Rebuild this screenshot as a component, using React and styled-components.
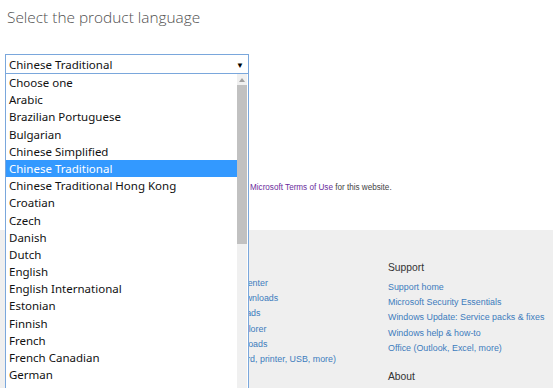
import React from 'react';
import styled, { createGlobalStyle } from 'styled-components';

const COLORS = {
  heading: '#505050',
  text: '#111',
  border: '#7aa7dc',
  highlight: '#3399ff',
  footer: '#efefef',
  link: '#3d7cbd',
  visited: '#6a2c9c',
};

const LANGUAGES = [
  'Choose one', 'Arabic', 'Brazilian Portuguese', 'Bulgarian', 'Chinese Simplified',
  'Chinese Traditional', 'Chinese Traditional Hong Kong', 'Croatian', 'Czech', 'Danish',
  'Dutch', 'English', 'English International', 'Estonian', 'Finnish', 'French',
  'French Canadian', 'German', 'Greek',
];

const GlobalStyle = createGlobalStyle`
  html, body { margin: 0; padding: 0; background: #fff; }
  body { font-family: "Noto Sans", "Open Sans", sans-serif; overflow: hidden; }
`;

const Page = styled.div`
  position: relative;
  width: 553px;
  height: 388px;
  overflow: hidden;
`;

const Main = styled.div`
  padding: 6px 5px 0 5px;
  height: 230px;
  box-sizing: border-box;
`;

const Heading = styled.h1`
  font-family: "Open Sans", sans-serif;
  font-weight: 300;
  font-size: 15.4px;
  color: ${COLORS.heading};
  margin: 0 0 0 2px;
  line-height: 24px;
`;

const SelectBox = styled.div`
  margin-top: 24px;
  width: 244px;
  height: 20px;
  box-sizing: border-box;
  border: 1px solid ${COLORS.border};
  display: flex;
  align-items: center;
  justify-content: space-between;
  padding: 0 4px 0 3px;
  font-size: 11.5px;
  color: ${COLORS.text};
`;

const Arrow = styled.span`
  font-size: 8px;
  color: #000;
`;

const Terms = styled.p`
  margin: 109px 0 0 245px;
  font-family: "Liberation Sans", sans-serif;
  font-size: 8.15px;
  color: #444;
`;

const TermsLink = styled.a`
  color: ${COLORS.visited};
  text-decoration: none;
`;

const Footer = styled.footer`
  background: ${COLORS.footer};
  height: 158px;
  display: grid;
  grid-template-columns: 203px 200px;
  padding: 31px 0 0 185px;
  box-sizing: border-box;
`;

const Column = styled.div`
  display: flex;
  flex-direction: column;
`;

const ColumnTitle = styled.div`
  font-family: "Liberation Sans", sans-serif;
  font-size: 10.3px;
  color: #333;
  height: 19px;
  line-height: 14px;
`;

const FooterLink = styled.a`
  font-family: "Liberation Sans", sans-serif;
  font-size: 8.9px;
  color: ${COLORS.link};
  text-decoration: none;
  line-height: 15.2px;
  white-space: nowrap;
`;

const Spacer = styled.div`
  height: ${(p) => p.h}px;
`;

const ListBox = styled.div`
  position: absolute;
  top: 74px;
  left: 5px;
  width: 244px;
  height: 330px;
  box-sizing: border-box;
  background: #fff;
  border-left: 1px solid ${COLORS.border};
  border-right: 1px solid ${COLORS.border};
  display: flex;
`;

const Options = styled.ul`
  list-style: none;
  margin: 0;
  padding: 0;
  flex: 1;
`;

const Option = styled.li`
  height: 17.2px;
  line-height: 17.2px;
  padding-left: 3px;
  font-size: 11.5px;
  color: ${(p) => (p.selected ? '#fff' : COLORS.text)};
  background: ${(p) => (p.selected ? COLORS.highlight : 'transparent')};
  white-space: nowrap;
`;

const ScrollBar = styled.div`
  width: 10px;
  margin-right: 1px;
  background: #f0f0f0;
  display: flex;
  flex-direction: column;
`;

const ScrollButton = styled.div`
  height: 11px;
  display: flex;
  align-items: center;
  justify-content: center;
`;

const Thumb = styled.div`
  height: 159px;
  background: #c1c1c1;
`;

const App = () => {
  return (
    <Page>
      <GlobalStyle />
      <Main>
        <Heading>Select the product language</Heading>
        <SelectBox>
          <span>Chinese Traditional</span>
          <Arrow>▼</Arrow>
        </SelectBox>
        <Terms>
          <TermsLink href="#">Microsoft Terms of Use</TermsLink> for this website.
        </Terms>
      </Main>
      <Footer>
        <Column>
          <Spacer h={15} />
          <FooterLink href="#">My Download Center</FooterLink>
          <FooterLink href="#">Windows 10 downloads</FooterLink>
          <FooterLink href="#">Surface downloads</FooterLink>
          <FooterLink href="#">MS Internet Explorer</FooterLink>
          <FooterLink href="#">Xbox 360 downloads</FooterLink>
          <FooterLink href="#">Drivers (keyboard, printer, USB, more)</FooterLink>
        </Column>
        <Column>
          <ColumnTitle>Support</ColumnTitle>
          <FooterLink href="#">Support home</FooterLink>
          <FooterLink href="#">Microsoft Security Essentials</FooterLink>
          <FooterLink href="#">Windows Update: Service packs &amp; fixes</FooterLink>
          <FooterLink href="#">Windows help &amp; how-to</FooterLink>
          <FooterLink href="#">Office (Outlook, Excel, more)</FooterLink>
          <Spacer h={14} />
          <ColumnTitle>About</ColumnTitle>
        </Column>
      </Footer>
      <ListBox>
        <Options>
          {LANGUAGES.map((lang) => (
            <Option key={lang} selected={lang === 'Chinese Traditional'}>{lang}</Option>
          ))}
        </Options>
        <ScrollBar>
          <ScrollButton>
            <svg width="6" height="4" viewBox="0 0 6 4">
              <path d="M0 4 L3 0 L6 4 Z" fill="#a0a0a0" />
            </svg>
          </ScrollButton>
          <Thumb />
        </ScrollBar>
      </ListBox>
    </Page>
  );
};

export default App;
